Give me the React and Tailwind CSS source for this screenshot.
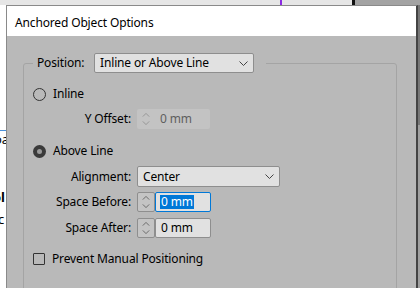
function Chevron({ up = false, color = "#444", w = 9, h = 5 }) {
  return (
    <svg width={w} height={h} viewBox="0 0 9 5" className="block">
      <polyline
        points={up ? "0.5,4.5 4.5,0.5 8.5,4.5" : "0.5,0.5 4.5,4.5 8.5,0.5"}
        fill="none"
        stroke={color}
        strokeWidth="1"
      />
    </svg>
  );
}

function Dropdown({ value, width }) {
  return (
    <div
      className={`${width} h-full flex items-center justify-between pl-[5px] pr-[5px] bg-[#e1e1e1] border border-[#8e8e8e] rounded-[2px] text-black`}
    >
      <span>{value}</span>
      <Chevron />
    </div>
  );
}

function Arrows({ color }) {
  return (
    <div className="flex flex-col items-center justify-center gap-[4px]">
      <Chevron up color={color} w={8} h={4} />
      <Chevron color={color} w={8} h={4} />
    </div>
  );
}

function Spinner({ value, disabled, focused }) {
  if (disabled) {
    return (
      <div className="w-[73px] h-full flex bg-[#c3c3c3] rounded-[2px]">
        <div className="w-[18px] flex items-center justify-center">
          <Arrows color="#8c8c8c" />
        </div>
        <span className="pl-[5px] self-center text-[#5f5f5f]">{value}</span>
      </div>
    );
  }
  return (
    <div className="w-[74px] h-full flex">
      <div className="w-[18px] flex items-center justify-center border border-[#8e8e8e] rounded-[2px] bg-[#c4c4c4]">
        <Arrows color="#555" />
      </div>
      <div
        className={`flex-1 flex items-center pl-[4px] rounded-[2px] bg-[#e1e1e1] border ${
          focused ? "border-[#0078d7]" : "border-[#8e8e8e]"
        }`}
      >
        {focused ? (
          <span className="bg-[#0078d7] text-white leading-[14px] px-[1px]">{value}</span>
        ) : (
          <span className="pl-[1px] text-black">{value}</span>
        )}
      </div>
    </div>
  );
}

function Radio({ checked }) {
  if (checked) {
    return (
      <div className="w-[13px] h-[13px] rounded-full bg-[#3a3a3a] flex items-center justify-center">
        <div className="w-[5px] h-[5px] rounded-full bg-[#9a9a9a]" />
      </div>
    );
  }
  return <div className="w-[13px] h-[13px] rounded-full border border-[#333]" />;
}

function FieldRow({ label, className, children }) {
  return (
    <div className={`flex items-center ${className}`}>
      <span className="w-[98px] text-right text-black">{label}</span>
      <div className="ml-[6px] h-full flex">{children}</div>
    </div>
  );
}

export default function App() {
  return (
    <div className="w-[420px] h-[288px] relative overflow-hidden bg-white font-['Segoe_UI','Noto_Sans',sans-serif] text-[12px] tracking-[-0.15px]">
      {/* what lies behind the dialog */}
      <div className="absolute top-0 left-0 right-0 h-[5px] bg-[#e6e6e6]">
        <div className="absolute left-[280px] top-0 w-[2px] h-full bg-[#8a2be2]" />
        <div className="absolute left-[352px] top-0 w-[3px] h-full bg-[#111]" />
        <div className="absolute left-[355px] right-0 top-0 h-full bg-[#a3a3a3]" />
      </div>
      <div className="absolute left-0 top-[130px] w-[6px] h-[1px] bg-[#4a90d9]" />
      <div className="absolute left-0 top-[133px] w-[6px] overflow-hidden text-[13px] leading-none text-black">
        <div className="-ml-[6px]">oa</div>
        <div className="-ml-[7px] mt-[45px] font-bold">ol</div>
        <div className="-ml-[2px] mt-[9px]">c</div>
      </div>
      <div className="absolute right-0 top-[5px] w-[2px] h-[120px] bg-[#777]" />
      <div className="absolute right-0 top-[125px] w-[2px] bottom-0 bg-[#a0a0a0]" />

      {/* dialog window */}
      <div className="absolute left-[6px] top-[5px] w-[412px] h-[290px] flex flex-col border-l border-t border-[#8a8a8a] border-r-2 border-r-[#444] bg-[#b9b9b9]">
        <div className="h-[30px] shrink-0 bg-white flex items-center pl-[8px] pt-[3px] text-black">
          Anchored Object Options
        </div>
        <div className="pt-[17px] pl-[16px]">
          <fieldset className="w-[374px] h-[260px] border border-[#a4a4a4] rounded-[3px]">
            <legend className="ml-[9px] pl-[4px] pr-[12px] h-[20px] flex items-center">
              <span className="w-[57px] text-black">Position:</span>
              <div className="h-[20px] flex">
                <Dropdown value="Inline or Above Line" width="w-[160px]" />
              </div>
            </legend>
            <div className="pl-[9px] flex flex-col">
              <div className="mt-[11px] h-[20px] flex items-center gap-[7px] text-black">
                <Radio />
                <span>Inline</span>
              </div>
              <FieldRow label="Y Offset:" className="mt-[5px] h-[20px]">
                <Spinner value="0 mm" disabled />
              </FieldRow>
              <div className="mt-[12px] h-[20px] flex items-center gap-[7px] text-black">
                <Radio checked />
                <span>Above Line</span>
              </div>
              <FieldRow label="Alignment:" className="mt-[5px] h-[21px]">
                <Dropdown value="Center" width="w-[143px]" />
              </FieldRow>
              <FieldRow label="Space Before:" className="mt-[5px] h-[20px]">
                <Spinner value="0 mm" focused />
              </FieldRow>
              <FieldRow label="Space After:" className="mt-[6px] h-[20px]">
                <Spinner value="0 mm" />
              </FieldRow>
              <div className="mt-[11px] h-[20px] flex items-center gap-[7px] text-black">
                <div className="w-[12px] h-[12px] border border-[#333] rounded-[1px]" />
                <span>Prevent Manual Positioning</span>
              </div>
            </div>
          </fieldset>
        </div>
      </div>
    </div>
  );
}
